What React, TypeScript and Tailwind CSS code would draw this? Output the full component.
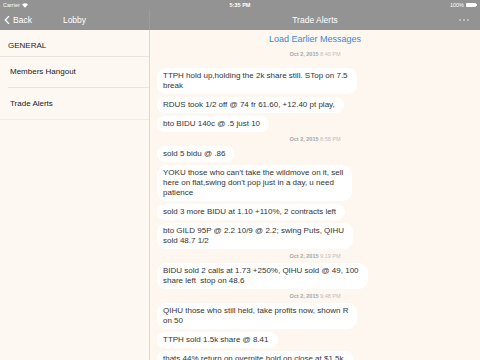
import { Fragment } from "react";

type Item =
  | { kind: "time"; date: string; time: string }
  | { kind: "msg"; lines: string[] };

const ITEMS: Item[] = [
  { kind: "msg", lines: ["TTPH hold up,holding the 2k share still. STop on 7.5", "break"] },
  { kind: "msg", lines: ["RDUS took 1/2 off @ 74 fr 61.60, +12.40 pt play,"] },
  { kind: "msg", lines: ["bto BIDU 140c @ .5 just 10"] },
  { kind: "time", date: "Oct 2, 2015", time: "8:58 PM" },
  { kind: "msg", lines: ["sold 5 bidu @ .86"] },
  {
    kind: "msg",
    lines: [
      "YOKU those who can't take the wildmove on it, sell",
      "here on flat,swing don't pop just in a day, u need",
      "patience",
    ],
  },
  { kind: "msg", lines: ["sold 3 more BIDU at 1.10 +110%, 2 contracts left"] },
  { kind: "msg", lines: ["bto GILD 95P @ 2.2 10/9 @ 2.2; swing Puts, QIHU", "sold 48.7 1/2"] },
  { kind: "time", date: "Oct 2, 2015", time: "9:19 PM" },
  {
    kind: "msg",
    lines: ["BIDU sold 2 calls at 1.73 +250%, QIHU sold @ 49, 100", "share left  stop on 48.6"],
  },
  { kind: "time", date: "Oct 2, 2015", time: "9:48 PM" },
  { kind: "msg", lines: ["QIHU those who still held, take profits now, shown R", "on 50"] },
  { kind: "msg", lines: ["TTPH sold 1.5k share @ 8.41"] },
  { kind: "msg", lines: ["thats 44% return on overnite hold on close at $1.5k"] },
];

function Bubble({ lines }: { lines: string[] }) {
  return (
    <div className="self-start rounded-[9px] bg-white py-[3px] pl-[6px] pr-[9px] text-[8px] leading-[10px] text-[#333] whitespace-pre">
      {lines.map((l, i) => (
        <Fragment key={i}>
          {i > 0 && <br />}
          {l}
        </Fragment>
      ))}
    </div>
  );
}

function Stamp({ date, time }: { date: string; time: string }) {
  return (
    <div className="pr-[7px] text-center text-[5.5px] leading-[8px]">
      <span className="font-bold text-[#a6a6a6]">{date}</span>{" "}
      <span className="text-[#bdbdbd]">{time}</span>
    </div>
  );
}

export default function App() {
  return (
    <div
      className="flex h-[360px] w-[480px] flex-col overflow-hidden bg-[#fdf8f2]"
      style={{ fontFamily: '"Liberation Sans", Arial, sans-serif' }}
    >
      {/* top bar */}
      <div className="flex h-[30px] shrink-0 flex-col bg-[#939393] text-white">
        <div className="flex h-[10px] items-center justify-between px-[3px] text-[5.5px]">
          <div className="flex w-[60px] items-center gap-[2px]">
            Carrier
            <svg width="6" height="5" viewBox="0 0 12 9">
              <path d="M6 9 L0 2.5 A9 9 0 0 1 12 2.5 Z" fill="white" />
            </svg>
          </div>
          <div className="font-bold">5:35 PM</div>
          <div className="flex w-[60px] items-center justify-end gap-[2px]">
            100%
            <div className="flex items-center">
              <div className="h-[4px] w-[10px] rounded-[1px] bg-white" />
              <div className="h-[2px] w-[1px] bg-white" />
            </div>
          </div>
        </div>
        <div className="flex flex-1 items-center">
          <div className="relative flex h-full w-[150px] items-center justify-center border-r border-[#9c9c9c] text-[8.5px]">
            <div className="absolute left-[4px] flex items-center gap-[3px]">
              <svg width="6" height="10" viewBox="0 0 7 11">
                <path d="M5.8 1 L1.5 5.5 L5.8 10" stroke="white" strokeWidth="1.6" fill="none" />
              </svg>
              <span>Back</span>
            </div>
            <span>Lobby</span>
          </div>
          <div className="relative flex h-full flex-1 items-center justify-center text-[8.5px]">
            <span>Trade Alerts</span>
            <div className="absolute right-[11px] flex gap-[2px]">
              <div className="h-[2px] w-[2px] rounded-full bg-[#c8c8c8]" />
              <div className="h-[2px] w-[2px] rounded-full bg-[#c8c8c8]" />
              <div className="h-[2px] w-[2px] rounded-full bg-[#c8c8c8]" />
            </div>
          </div>
        </div>
      </div>

      <div className="flex min-h-0 flex-1">
        {/* lobby list */}
        <div className="w-[150px] shrink-0 border-r border-[#dcd8d3] text-[8px] text-[#222]">
          <div className="flex h-[27px] items-end border-b border-[#e8e4df] px-[8px] pb-[4px]">
            GENERAL
          </div>
          <div className="ml-[8px] flex h-[31px] items-center border-b border-[#e8e4df] pl-[2px]">
            Members Hangout
          </div>
          <div className="flex h-[32px] items-center border-b border-[#f0ece7] pl-[10px]">
            Trade Alerts
          </div>
        </div>

        {/* chat */}
        <div className="flex flex-1 flex-col bg-[#fef7ef] pl-[7px] pt-[3px]">
          <div className="pr-[7px] text-center text-[9px] leading-[12px] text-[#3b87d6]">
            Load Earlier Messages
          </div>
          <div className="mb-[10px] mt-[5px]">
            <Stamp date="Oct 2, 2015" time="8:40 PM" />
          </div>
          <div className="flex flex-col gap-[3px]">
            {ITEMS.map((it, i) =>
              it.kind === "time" ? (
                <Stamp key={i} date={it.date} time={it.time} />
              ) : (
                <Bubble key={i} lines={it.lines} />
              )
            )}
          </div>
        </div>
      </div>
    </div>
  );
}
